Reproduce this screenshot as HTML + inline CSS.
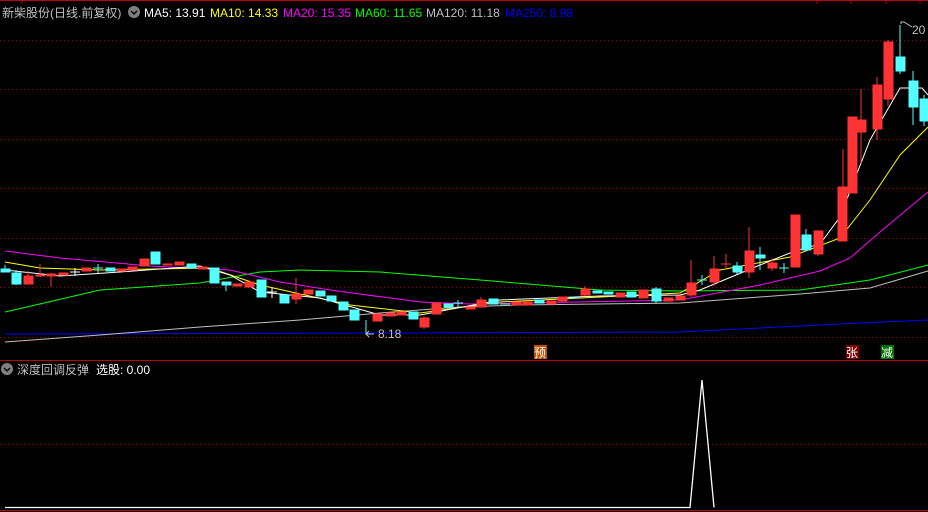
<!DOCTYPE html>
<html><head><meta charset="utf-8"><style>
html,body{margin:0;padding:0;background:#000;width:928px;height:512px;overflow:hidden}
svg{display:block}
text{font-family:"Liberation Sans","Noto Sans CJK SC",sans-serif;font-size:12px}
</style></head><body>
<svg width="928" height="512" viewBox="0 0 928 512" xmlns="http://www.w3.org/2000/svg">
<rect width="928" height="512" fill="#000"/>
<!-- top border -->
<line x1="0" y1="0.5" x2="928" y2="0.5" stroke="#c00000"/>
<g stroke="#c00000"><line x1="22" y1="0" x2="22" y2="4"/><line x1="817" y1="0" x2="817" y2="4"/><line x1="851" y1="0" x2="851" y2="4"/><line x1="886" y1="0" x2="886" y2="4"/><line x1="920" y1="0" x2="920" y2="4"/></g>
<!-- grid -->
<g stroke="#a00000" stroke-dasharray="1,3">
<line x1="0" y1="40.5" x2="928" y2="40.5"/><line x1="0" y1="89.5" x2="928" y2="89.5"/><line x1="0" y1="139.5" x2="928" y2="139.5"/><line x1="0" y1="188.5" x2="928" y2="188.5"/><line x1="0" y1="238.5" x2="928" y2="238.5"/><line x1="0" y1="287.5" x2="928" y2="287.5"/><line x1="0" y1="337.5" x2="928" y2="337.5"/><line x1="0" y1="444.5" x2="928" y2="444.5"/>
</g>
<line x1="0" y1="360.5" x2="928" y2="360.5" stroke="#c00000"/>
<line x1="0" y1="510.5" x2="928" y2="510.5" stroke="#c00000"/>
<!-- MAs -->
<g fill="none" stroke-width="1">
<polyline stroke="#0000ff" points="5,334 400,333 680,332 740,329 860,323 928,320"/>
<polyline stroke="#c0c0c0" points="5,342 100,335 200,327 300,320 380,313 460,307 520,305 680,303 800,294 870,288 928,271"/>
<polyline stroke="#00ff00" points="5,312 100,290 200,283 260,272 300,270 380,272 480,280 600,290 680,291 800,290 870,280 928,265"/>
<polyline stroke="#ff00ff" points="5,251 60,258 150,266 230,270 280,282 330,290 420,302 470,304 680,300 760,285 820,271 850,258 880,232 928,192"/>
<polyline stroke="#ffff00" points="5,262 40,268 100,270 210,268 260,285 350,305 420,313 500,302 680,293 720,270 790,257 840,238 870,200 900,155 928,127"/>
<polyline stroke="#ffffff" points="5,270 60,276 120,272 200,266 230,275 260,292 320,298 380,315 420,315 500,300 600,296 680,295 700,290 760,265 795,251 820,244 840,217 870,140 900,88 922,88 928,95"/>
</g>
<!-- candles -->
<g stroke="#ff3333" fill="#ff3333">
<line x1="28" y1="271" x2="28" y2="284"/><rect x="24" y="276" width="9" height="8"/>
<line x1="40" y1="264" x2="40" y2="277"/><rect x="36" y="275" width="9" height="1"/>
<line x1="51" y1="273" x2="51" y2="287"/><rect x="47" y="274" width="9" height="2"/>
<rect x="59" y="273" width="9" height="2"/><rect x="82" y="268" width="9" height="3"/>
<rect x="117" y="269" width="9" height="2"/><rect x="128" y="267" width="9" height="3"/>
<rect x="140" y="259" width="9" height="7"/><rect x="163" y="264" width="9" height="1"/>
<rect x="175" y="262" width="9" height="3"/><rect x="198" y="267" width="9" height="2"/>
<rect x="233" y="284" width="9" height="2"/><rect x="245" y="282" width="9" height="5"/>
<line x1="296" y1="278" x2="296" y2="304"/><rect x="292" y="294" width="9" height="5"/>
<rect x="304" y="290" width="9" height="4"/>
<rect x="373" y="314" width="9" height="7"/><rect x="386" y="313" width="9" height="3"/>
<rect x="397" y="312" width="9" height="3"/><line x1="424" y1="316" x2="424" y2="329"/><rect x="420" y="318" width="9" height="9"/>
<rect x="432" y="303" width="9" height="11"/><rect x="466" y="307" width="9" height="2"/>
<line x1="481" y1="297" x2="481" y2="307"/><rect x="477" y="300" width="9" height="7"/>
<rect x="512" y="302" width="9" height="3"/><rect x="523" y="302" width="9" height="3"/>
<rect x="547" y="301" width="9" height="3"/><rect x="558" y="297" width="9" height="4"/>
<line x1="585" y1="286" x2="585" y2="296"/><rect x="581" y="289" width="9" height="6"/>
<rect x="616" y="293" width="9" height="4"/><rect x="639" y="290" width="9" height="8"/>
<rect x="664" y="298" width="9" height="3"/><rect x="676" y="296" width="9" height="4"/>
<line x1="691" y1="260" x2="691" y2="297"/><rect x="687" y="283" width="9" height="12"/>
<line x1="714" y1="256" x2="714" y2="286"/><rect x="710" y="269" width="9" height="13"/>
<line x1="726" y1="254" x2="726" y2="270"/><line x1="721" y1="264" x2="731" y2="264"/>
<line x1="749" y1="227" x2="749" y2="278"/><rect x="745" y="251" width="9" height="21"/>
<line x1="772" y1="258" x2="772" y2="271"/><rect x="768" y="263" width="9" height="5"/>
<rect x="791" y="215" width="9" height="52"/>
<line x1="818" y1="230" x2="818" y2="256"/><rect x="814" y="231" width="9" height="23"/>
<line x1="843" y1="149" x2="843" y2="217"/><rect x="838" y="187" width="9" height="54"/>
<rect x="848" y="117" width="9" height="76"/>
<line x1="861" y1="89" x2="861" y2="163"/><rect x="857" y="120" width="9" height="12"/>
<line x1="877" y1="77" x2="877" y2="140"/><rect x="873" y="85" width="9" height="44"/>
<line x1="888" y1="40" x2="888" y2="106"/><rect x="884" y="42" width="9" height="57"/>
</g>
<g stroke="#54ffff" fill="#54ffff">
<line x1="5" y1="265" x2="5" y2="272"/><rect x="1" y="269" width="9" height="3"/>
<line x1="16" y1="270" x2="16" y2="285"/><rect x="12" y="273" width="9" height="11"/>
<line x1="70" y1="272" x2="80" y2="272" stroke="#fff"/><line x1="75" y1="268" x2="75" y2="276" stroke="#fff"/>
<line x1="93" y1="268" x2="103" y2="268"/><line x1="98" y1="264" x2="98" y2="273"/>
<rect x="106" y="268" width="9" height="3"/>
<rect x="151" y="252" width="9" height="12"/>
<rect x="187" y="264" width="9" height="4"/>
<rect x="210" y="268" width="9" height="15"/>
<line x1="226" y1="282" x2="226" y2="291"/><rect x="222" y="282" width="9" height="3"/>
<rect x="257" y="280" width="9" height="17"/>
<line x1="267" y1="292" x2="277" y2="292" stroke="#fff"/><line x1="272" y1="287" x2="272" y2="298" stroke="#fff"/>
<rect x="280" y="295" width="9" height="8"/>
<rect x="316" y="291" width="9" height="5"/><rect x="327" y="296" width="9" height="5"/>
<rect x="339" y="302" width="9" height="8"/>
<line x1="366" y1="320" x2="366" y2="334"/><rect x="350" y="310" width="9" height="10"/>
<rect x="409" y="312" width="9" height="7"/>
<rect x="444" y="304" width="9" height="3"/><line x1="453" y1="303" x2="463" y2="303"/><line x1="458" y1="300" x2="458" y2="308"/>
<rect x="489" y="299" width="9" height="5"/><line x1="500" y1="304" x2="510" y2="304"/>
<rect x="535" y="300" width="9" height="3"/><line x1="569" y1="298" x2="579" y2="298"/>
<rect x="593" y="291" width="9" height="2"/><rect x="604" y="292" width="9" height="2"/>
<rect x="627" y="292" width="9" height="5"/><line x1="656" y1="287" x2="656" y2="303"/><rect x="652" y="289" width="9" height="12"/>
<line x1="697" y1="280" x2="707" y2="280"/><line x1="702" y1="275" x2="702" y2="285"/>
<line x1="737" y1="262" x2="737" y2="274"/><rect x="733" y="266" width="9" height="6"/>
<line x1="760" y1="247" x2="760" y2="270"/><rect x="756" y="255" width="9" height="3"/>
<line x1="779" y1="268" x2="789" y2="268"/><line x1="784" y1="263" x2="784" y2="273"/>
<line x1="806" y1="229" x2="806" y2="251"/><rect x="802" y="235" width="9" height="15"/>
<line x1="900" y1="25" x2="900" y2="74"/><rect x="896" y="57" width="9" height="14"/>
<line x1="913" y1="71" x2="913" y2="125"/><rect x="909" y="81" width="9" height="26"/>
<line x1="924" y1="95" x2="924" y2="126"/><rect x="920" y="99" width="9" height="22"/>
</g>
<!-- annotations -->
<path d="M901 24 L901 22 L904 22 L912 27" stroke="#c0c0c0" fill="none"/>
<text x="912" y="34" fill="#c0c0c0">20</text>
<path d="M374 334 L366 334 M369 331 L366 334 L369 337" stroke="#c0c0c0" fill="none"/>
<text x="378" y="338" fill="#c0c0c0">8.18</text>
<rect x="534" y="345" width="13" height="14" fill="#c05000"/><text x="534" y="357" fill="#fff">预</text>
<rect x="846" y="345" width="13" height="14" fill="#800000"/><text x="846" y="357" fill="#fff">张</text>
<rect x="881" y="345" width="13" height="14" fill="#007000"/><text x="881" y="357" fill="#fff">减</text>
<!-- header -->
<text x="2" y="17" fill="#c0c0c0">新柴股份(日线.前复权)</text>
<circle cx="134" cy="12" r="6" fill="#808080"/><path d="M131 11 L134 14 L137 11" stroke="#000" stroke-width="1.5" fill="none"/>
<text x="144" y="17" fill="#ffffff">MA5: 13.91</text>
<text x="210" y="17" fill="#ffff00">MA10: 14.33</text>
<text x="283" y="17" fill="#ff00ff">MA20: 15.35</text>
<text x="355" y="17" fill="#00ff00">MA60: 11.65</text>
<text x="426" y="17" fill="#c0c0c0">MA120: 11.18</text>
<text x="505" y="17" fill="#0000ff">MA250: 8.98</text>
<circle cx="7" cy="369" r="6" fill="#808080"/><path d="M4 368 L7 371 L10 368" stroke="#000" stroke-width="1.5" fill="none"/>
<text x="17" y="374" fill="#c0c0c0">深度回调反弹</text><text x="96" y="374" fill="#ffffff">选股: 0.00</text>
<!-- indicator -->
<polyline points="5,507.5 690,507.5 702,380 714,507.5" fill="none" stroke="#fff" stroke-width="1.3"/>
</svg>
</body></html>
